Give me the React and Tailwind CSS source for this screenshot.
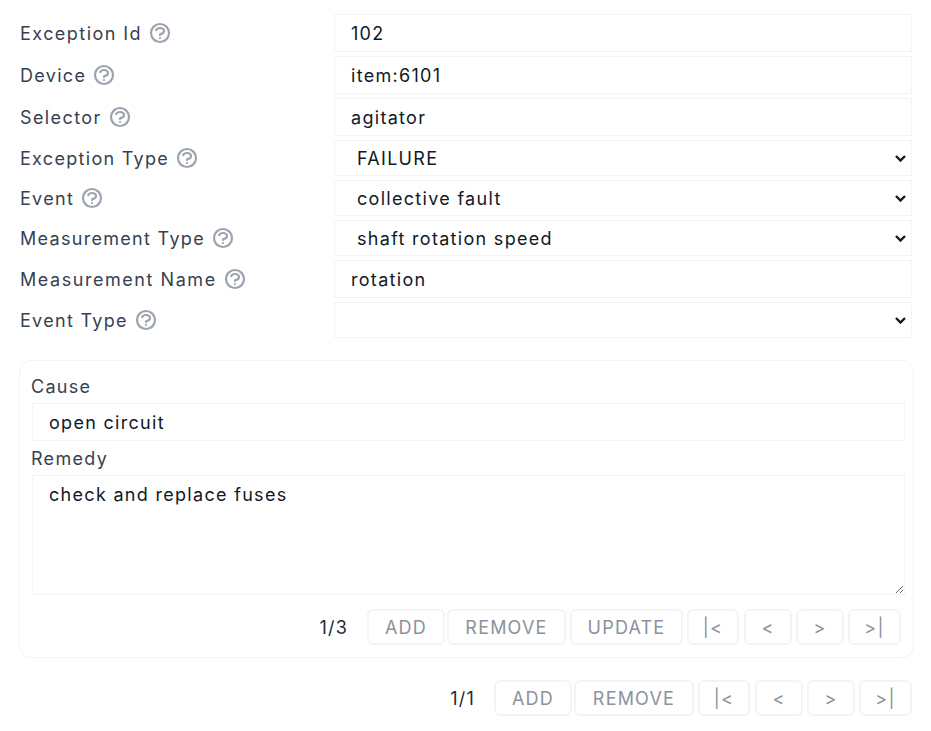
const labelClass = "text-[18px] leading-[24px] tracking-[1.3px] text-[#374151]";
const inputClass = "w-full h-[38px] border border-[#f3f4f6] px-4 text-[18px] tracking-[1.3px] text-[#111827] outline-none bg-white";
const selectClass = "w-full h-[36px] border border-[#f3f4f6] pl-[22px] pr-0 text-[18px] tracking-[1.3px] text-[#111827] outline-none bg-white appearance-none";

function HelpIcon() {
  return (
    <svg viewBox="0 0 24 24" fill="none" stroke="currentColor" strokeWidth="2.2" className="w-[24px] h-[24px] ml-[6px] text-[#9ca3af]">
      <path strokeLinecap="round" strokeLinejoin="round" d="M8.228 9c.549-1.165 2.03-2 3.772-2 2.21 0 4 1.343 4 3 0 1.4-1.278 2.575-3.006 2.907-.542.104-.994.54-.994 1.093m0 3h.01M21 12a9 9 0 11-18 0 9 9 0 0118 0z" />
    </svg>
  );
}

function Row({ label, track = "", children }) {
  return (
    <div className="flex items-center">
      <div className="w-[314px] flex items-center shrink-0">
        <span className={`${labelClass} ${track} pt-[2px]`}>{label}</span>
        <HelpIcon />
      </div>
      <div className="flex-1">{children}</div>
    </div>
  );
}

function Select({ value }) {
  return (
    <div className="relative">
      <select className={selectClass} defaultValue={value}><option>{value}</option></select>
      <svg viewBox="0 0 11 7" fill="none" stroke="#111827" strokeWidth="2.4" className="absolute right-[6px] top-[15px] w-[11px] h-[7px] pointer-events-none">
        <path d="M1 1l4.5 4.5L10 1" />
      </svg>
    </div>
  );
}

function Btn({ w, mr, children }) {
  return (
    <button className={`${w} ${mr} h-[36px] border-2 border-[#f3f4f6] rounded-md bg-white text-[18px] tracking-[1.2px] text-[#8b929c]`}>
      {children}
    </button>
  );
}

function Pager({ count, update }) {
  return (
    <div className="flex items-center justify-end">
      <span className="text-[18px] tracking-[1.2px] text-[#1f2937] mr-[19px]">{count}</span>
      <Btn w="w-[78px]" mr="mr-[2px]">ADD</Btn>
      <Btn w={update ? "w-[119px]" : "w-[120px]"} mr="mr-[4px]">REMOVE</Btn>
      {update && <Btn w="w-[113px]" mr="mr-[4px]">UPDATE</Btn>}
      <Btn w="w-[52px]" mr="mr-[5px]">|&lt;</Btn>
      <Btn w="w-[48px]" mr="mr-[4px]">&lt;</Btn>
      <Btn w="w-[48px]" mr="mr-[4px]">&gt;</Btn>
      <Btn w="w-[53px]">&gt;|</Btn>
    </div>
  );
}

export default function App() {
  return (
    <div className="w-[931px] h-[731px] bg-white pt-[14px] pl-[20px] pr-[19px] font-['Inter',sans-serif] overflow-hidden">
      <div className="flex flex-col gap-[4px]">
        <Row label="Exception Id" track="tracking-[1.45px]"><input className={inputClass} defaultValue="102" /></Row>
        <Row label="Device" track="tracking-[1.1px]"><input className={inputClass} defaultValue="item:6101" /></Row>
        <Row label="Selector" track="tracking-[1.4px]"><input className={inputClass} defaultValue="agitator" /></Row>
        <Row label="Exception Type" track="tracking-[1.2px]"><Select value="FAILURE" /></Row>
        <Row label="Event"><Select value="collective fault" /></Row>
        <Row label="Measurement Type"><Select value="shaft rotation speed" /></Row>
        <Row label="Measurement Name" track="tracking-[1.55px]"><input className={inputClass} defaultValue="rotation" /></Row>
        <Row label="Event Type" track="tracking-[1.1px]"><Select value="" /></Row>
      </div>

      <div className="mt-[22px] -ml-[1px] w-[895px] h-[298px] border border-[#f3f4f6] rounded-xl pt-[14px] pl-[12px] pr-[8px]">
        <div className={`${labelClass} -ml-[1px]`}>Cause</div>
        <input className={`${inputClass} mt-[4px]`} defaultValue="open circuit" />
        <div className={`${labelClass} mt-[6px] -ml-[1px]`}>Remedy</div>
        <textarea className="block w-full h-[120px] mt-[4px] border border-[#f3f4f6] px-4 py-[5px] text-[18px] tracking-[1.3px] text-[#111827] outline-none bg-white" defaultValue="check and replace fuses" />
        <div className="mt-[14px] pr-[4px]">
          <Pager count="1/3" update />
        </div>
      </div>

      <div className="mt-[22px]">
        <Pager count="1/1" />
      </div>
    </div>
  );
}
